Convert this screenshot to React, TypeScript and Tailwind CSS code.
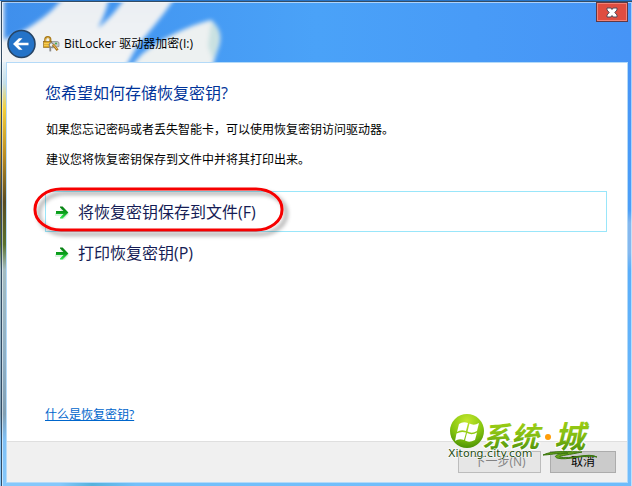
import type { ReactNode } from "react";

const BODY = "如果您忘记密码或者丢失智能卡，可以使用恢复密钥访问驱动器。";
const ADVICE = "建议您将恢复密钥保存到文件中并将其打印出来。";

function Wallpaper() {
  return (
    <svg className="absolute inset-0 h-full w-full" viewBox="0 0 632 486" preserveAspectRatio="none" aria-hidden="true">
      <defs>
        <linearGradient id="sky" x1="0" x2="1" y1="0" y2="0">
          <stop offset="0" stopColor="#3f8fec" />
          <stop offset="0.5" stopColor="#4aa2f8" />
          <stop offset="1" stopColor="#4694f6" />
        </linearGradient>
        <linearGradient id="leftEdge" x1="0" x2="0" y1="62" y2="486" gradientUnits="userSpaceOnUse">
          <stop offset="0" stopColor="#e4f0f8" />
          <stop offset="0.05" stopColor="#c5dfe8" />
          <stop offset="0.11" stopColor="#f3cf3c" />
          <stop offset="0.22" stopColor="#b98c22" />
          <stop offset="0.33" stopColor="#584a20" />
          <stop offset="0.43" stopColor="#58702c" />
          <stop offset="0.49" stopColor="#a3bcc2" />
          <stop offset="0.7" stopColor="#8fb0c6" />
          <stop offset="0.83" stopColor="#82a0b4" />
          <stop offset="0.89" stopColor="#7fc0f5" />
          <stop offset="1" stopColor="#85c8fb" />
        </linearGradient>
        <linearGradient id="rightEdge" x1="0" x2="0" y1="62" y2="486" gradientUnits="userSpaceOnUse">
          <stop offset="0" stopColor="#4694f6" />
          <stop offset="0.35" stopColor="#4c9ff8" />
          <stop offset="0.38" stopColor="#85b8ee" />
          <stop offset="0.45" stopColor="#85b8ee" />
          <stop offset="0.49" stopColor="#5aaefa" />
          <stop offset="1" stopColor="#72bdfb" />
        </linearGradient>
        <linearGradient id="bottomEdge" x1="0" x2="1" y1="0" y2="0">
          <stop offset="0" stopColor="#85c8fb" />
          <stop offset="0.09" stopColor="#85c8fb" />
          <stop offset="0.14" stopColor="#56b2dc" />
          <stop offset="0.21" stopColor="#74c0fa" />
          <stop offset="1" stopColor="#6ebcfb" />
        </linearGradient>
        <linearGradient id="petal" x1="0" x2="0" y1="0" y2="1">
          <stop offset="0" stopColor="#e9eef2" />
          <stop offset="1" stopColor="#f4f5f6" />
        </linearGradient>
        <filter id="soft" x="-20%" y="-20%" width="140%" height="140%">
          <feGaussianBlur stdDeviation="2" />
        </filter>
      </defs>
      <rect width="632" height="486" fill="url(#sky)" />
      <g filter="url(#soft)">
        <path d="M-6 70V-8H4V40C16 35 26 30 34 24C46 16 56 8 68-8H110C107 10 103 18 98 28C108 20 120 8 128-8H178C168 10 152 28 136 48L124 70Z" fill="url(#petal)" />
        <path d="M128 70L142 54C162 38 188 26 211 20C220 28 222 36 219 46L211 70Z" fill="#edf1f1" />
        <path d="M211 22C221 28 223 38 213 60L208 46Z" fill="#c9e1e1" />
      </g>
      <rect y="62" width="8" height="424" fill="url(#leftEdge)" />
      <rect x="626" y="62" width="6" height="424" fill="url(#rightEdge)" />
      <rect x="4" y="482" width="628" height="4" fill="url(#bottomEdge)" />
      <path d="M0 0H632V1H0Z" fill="#2674c8" />
      <path d="M1 1H632V2H1ZM1 2H2V486H1Z" fill="#344c64" />
      <path d="M2 2H632V3H2ZM2 3H3V486H2ZM631 3H632V486H631Z" fill="#fff" opacity="0.55" />
    </svg>
  );
}

function BackIcon() {
  return (
    <svg viewBox="0 0 30 30" className="block h-[30px] w-[30px]" aria-hidden="true">
      <circle cx="14.500" cy="15" r="13.5" fill="#2473c8" stroke="#274566" strokeWidth="1.6" />
      <path d="M21.500 13.7H11.300L15.500 9.2H11.900L6 15L11.900 20.8H15.500L11.300 16.3H21.500Z" fill="#fff" />
    </svg>
  );
}

function KeyLockIcon() {
  return (
    <svg viewBox="0 0 16 16" className="block h-4 w-4 overflow-visible" aria-hidden="true">
      <path d="M8 5.500H14.500L16 6.500V10.500L9 12Z" fill="#c4c8ca" stroke="#737a7e" strokeWidth="0.6" />
      <circle cx="13" cy="7.500" r="1" fill="#3ba84a" />
      <path d="M2.200 6.500V3.600C2.200 0 7.400 0 7.400 3.600V6.500" fill="none" stroke="#a67716" strokeWidth="2" />
      <path d="M2.600 6V3.500C3 1 6.700 1 7 3.500" fill="none" stroke="#f2cd67" strokeWidth="0.8" />
      <rect x="0.6" y="5.500" width="7.600" height="6" fill="#dda823" stroke="#875f15" strokeWidth="0.6" />
      <path d="M1 7.400H7.600M1 9.300H7.600" stroke="#ffdc72" strokeWidth="0.8" />
      <circle cx="8.300" cy="9" r="2.200" fill="#ededed" stroke="#727272" strokeWidth="1" />
      <path d="M7.300 11V15.400" stroke="#8b8b8b" strokeWidth="1.800" />
      <path d="M10 8.500L14.600 14.200" stroke="#a9741e" strokeWidth="2.600" />
      <path d="M10.300 8.700L14 13.200" stroke="#efc25c" strokeWidth="1" />
    </svg>
  );
}

function CloseIcon() {
  return (
    <svg viewBox="0 0 12 11" className="block h-[11px] w-3" aria-hidden="true">
      <path d="M1 1H5L6 2.500L7 1H11V3L8.800 5.500L11 8V10H7L6 8.500L5 10H1V8L3.200 5.500L1 3Z" fill="#fff" stroke="#534a58" strokeWidth="1" />
    </svg>
  );
}

function GreenArrow() {
  return (
    <svg viewBox="0 0 16 16" className="block h-4 w-4 shrink-0 overflow-visible" aria-hidden="true">
      <defs>
        <linearGradient id="arrowGreen" x1="0" x2="0" y1="0" y2="1">
          <stop offset="0" stopColor="#087d12" />
          <stop offset="0.5" stopColor="#0b9e1c" />
          <stop offset="1" stopColor="#32ee50" />
        </linearGradient>
      </defs>
      <path d="M1 9H9L6 5H10L15 10L10 15H6L9 12H1Z" fill="#8c9" opacity="0.3" />
      <path d="M2 7H9.500L6 3.500V2.500H8.600L14.400 8.500L8.600 14.500H6V13.500L9.500 10H2Z" fill="url(#arrowGreen)" />
    </svg>
  );
}

function Option({ children, active }: { children: ReactNode; active?: boolean }) {
  return (
    <button
      type="button"
      className={`flex h-[41px] w-full items-center gap-2 border pl-2 text-left text-base text-[#151c55] ${
        active ? "border-[#99e6fa]" : "border-transparent"
      }`}
    >
      <GreenArrow />
      <span>{children}</span>
    </button>
  );
}

function HighlightRing() {
  return (
    <svg viewBox="0 0 260 56" className="pointer-events-none absolute -top-1 -left-3 h-14 w-[260px] overflow-visible" aria-hidden="true">
      <defs>
        <filter id="ringShadow" x="-10%" y="-20%" width="120%" height="150%">
          <feDropShadow dx="4" dy="4" stdDeviation="2" floodColor="#000" floodOpacity="0.4" />
        </filter>
      </defs>
      <rect x="2" y="2" width="247" height="41" rx="26" ry="20" fill="none" stroke="#f60000" strokeWidth="3" filter="url(#ringShadow)" />
    </svg>
  );
}

function SiteMark() {
  return (
    <svg
      viewBox="0 0 150 48"
      className="pointer-events-none absolute right-7 bottom-5 h-12 w-[150px] overflow-visible"
      role="img"
      aria-label="系统城 Xitong.city.com"
    >
      <defs>
        <radialGradient id="orb" cx="0.5" cy="0.2" r="0.8">
          <stop offset="0" stopColor="#c3e62e" />
          <stop offset="0.6" stopColor="#86c60f" />
          <stop offset="1" stopColor="#4c9206" />
        </radialGradient>
        <linearGradient id="leaf" x1="0" x2="0" y1="0" y2="1">
          <stop offset="0" stopColor="#a8d616" />
          <stop offset="0.5" stopColor="#86bf12" />
          <stop offset="1" stopColor="#3f8408" />
        </linearGradient>
      </defs>
      <circle cx="18" cy="17" r="17" fill="url(#orb)" />
      <path d="M10 10Q14 7 19 9L17 17Q12 15 8 18ZM20.500 9.500Q25 12 30 9L28 17Q23 20 18.500 17.500ZM7.500 19.500Q12 17 17 18.500L15 26Q10 24 6 27ZM18 19Q23 21.500 28 18.500L26 26Q20 29 16 26.500Z" fill="#fff" />
      <g fontFamily="'Noto Sans CJK SC', sans-serif" fontWeight="700" fontStyle="italic" fill="url(#leaf)" stroke="#fff" strokeWidth="2" paintOrder="stroke">
        <text x="33" y="33" fontSize="28">系</text>
        <text x="62" y="33" fontSize="28">统</text>
        <text x="105" y="34" fontSize="31">城</text>
      </g>
      <circle cx="99" cy="23" r="3" fill="#ff9d09" />
      <path d="M94 41C104 36 122 38 133 38C119 41 108 42 111 43C120 46 140 38 148 43C134 40 118 47 108 44C102 41 115 39 119 39C108 39 100 41 94 41Z" fill="#69a51b" stroke="#3a7410" strokeWidth="1" />
      <text x="-1" y="43" fontFamily="'DejaVu Sans', sans-serif" fontSize="11" fill="#244b10" stroke="#fff" strokeWidth="1" paintOrder="stroke">
        Xitong.city.com
      </text>
    </svg>
  );
}

export default function App() {
  return (
    <div className="relative flex min-h-screen flex-col bg-[#4694f6] pr-[5px] pb-1 pl-[7px] font-['Open_Sans','Noto_Sans_CJK_SC',sans-serif] text-xs text-black">
      <Wallpaper />

      {/* Title bar */}
      <header className="relative flex h-[63px] items-end pb-1">
        <button type="button" aria-label="后退" className="rounded-full">
          <BackIcon />
        </button>
        <div className="flex h-[30px] items-center gap-[5px] pl-1.5">
          <KeyLockIcon />
          <h1>BitLocker 驱动器加密(I:)</h1>
        </div>
        <button
          type="button"
          aria-label="关闭"
          className="absolute top-0.5 -right-px flex h-5 w-8 items-center justify-center border border-[#603845] bg-[#df4d40] inset-ring inset-ring-[#f08377]"
        >
          <CloseIcon />
        </button>
      </header>

      {/* Wizard page */}
      <div className="relative flex flex-1 flex-col bg-white outline outline-[#b4daf8]">
        <main className="flex flex-1 flex-col items-start pt-[18px] pr-5 pb-4 pl-[38px]">
          <h2 className="text-base leading-6 text-[#003399]">您希望如何存储恢复密钥?</h2>
          <p className="mt-[15px] pl-px leading-5">{BODY}</p>
          <p className="mt-2.5 pl-px leading-5">{ADVICE}</p>
          <div className="relative mt-[21px] w-full">
            <Option active>将恢复密钥保存到文件(F)</Option>
            <Option>打印恢复密钥(P)</Option>
            <HighlightRing />
          </div>
          <a href="#recovery-key" className="mt-auto leading-5 text-[#0066cc] underline">
            什么是恢复密钥?
          </a>
        </main>

        <footer className="flex h-[41px] items-center justify-end gap-[9px] border-t border-[#dfdfdf] bg-[#f0f0f0] pr-[11px]">
          <button type="button" disabled className="h-[22px] w-[83px] border border-[#bcbcbc] bg-[#e6e6e6] text-[#838383]">
            下一步(N)
          </button>
          <button type="button" className="h-[22px] w-[66px] border border-[#acacac] bg-[#cbcbcb]">
            取消
          </button>
        </footer>
        <SiteMark />
      </div>
    </div>
  );
}
